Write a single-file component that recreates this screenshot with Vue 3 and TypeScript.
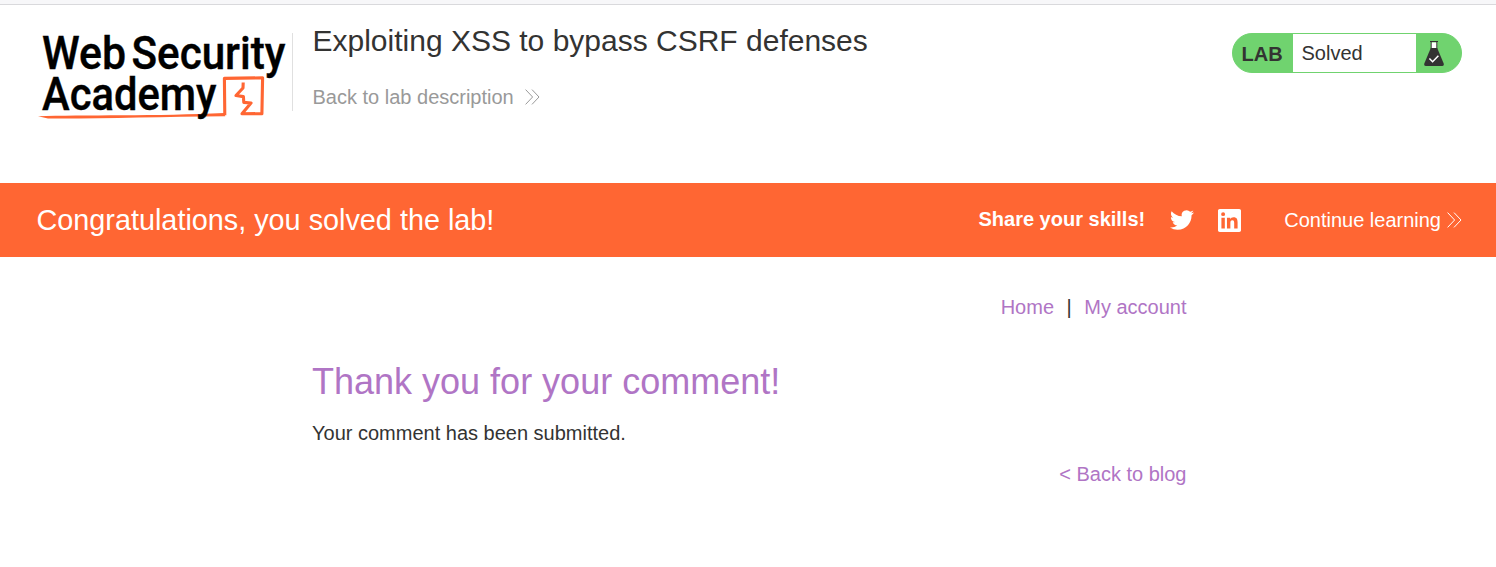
<script setup lang="ts">
const shareLabel = 'Share your skills!'
const navLinks: string[] = ['Home', 'My account']
</script>

<template>
  <div class="page">
    <div class="top-edge"></div>
    <header class="lab-header">
      <a class="logo" aria-label="Web Security Academy">
        <svg width="256" height="96" viewBox="34 29 256 96">
          <g class="word">
            <text x="42" y="69" textLength="84" lengthAdjust="spacingAndGlyphs">Web</text>
            <text x="131.5" y="69" textLength="154" lengthAdjust="spacingAndGlyphs">Security</text>
          </g>
          <path d="M38 116.3 C80 114.8 160 116.2 224 113 L225.3 116.3 C160 117 100 118.8 48 118.5 Z" fill="#ff6633" />
          <path d="M224.8 115.3 L224.4 78.4 L262.6 77.8 L261.9 113.6 L242 113.8 L251 103 L243.8 102.4 L243.4 96.6 L236 95.5 L243 88 L243.2 82.5" fill="none" stroke="#ff6633" stroke-width="3.1" stroke-linejoin="round" />
          <g class="word">
            <text x="42" y="110" textLength="174.5" lengthAdjust="spacingAndGlyphs">Academy</text>
          </g>
        </svg>
      </a>
      <div class="title-block">
        <h1>Exploiting XSS to bypass CSRF defenses</h1>
        <a class="back">
          <span>Back to lab description</span>
          <svg width="15" height="16" viewBox="0 0 15 16"><path d="M.6 .6 L7.6 8 L.6 15.4 M7 .6 L14 8 L7 15.4" /></svg>
        </a>
      </div>
      <div class="status">
        <span class="lab">LAB</span>
        <span class="state">Solved</span>
        <span class="flask">
          <svg width="20" height="26" viewBox="0 0 20 26">
            <path d="M7 1.5H13V8H7Z" fill="#fff" />
            <path d="M6 .5H14M7.2 1V8M12.8 1V8" stroke="#333332" stroke-width="1" fill="none" />
            <path d="M6.8 7H13.2L19.7 22.6Q20.2 25 18 25H2Q-.2 25 .3 22.6Z" fill="#333332" />
            <path d="M5.4 17.5L8.6 20.7L14.4 14.7" fill="none" stroke="#fff" stroke-width="1.5" />
          </svg>
        </span>
      </div>
    </header>

    <section class="banner">
      <h4>Congratulations, you solved the lab!</h4>
      <div class="share">
        <span class="share-label">{{ shareLabel }}</span>
        <svg class="twitter" width="24" height="24" viewBox="0 0 24 24"><path fill="#fff" d="M23.953 4.57a10 10 0 01-2.825.775 4.958 4.958 0 002.163-2.723c-.951.555-2.005.959-3.127 1.184a4.92 4.92 0 00-8.384 4.482C7.69 8.095 4.067 6.13 1.64 3.162a4.822 4.822 0 00-.666 2.475c0 1.71.87 3.213 2.188 4.096a4.904 4.904 0 01-2.228-.616v.06a4.923 4.923 0 003.946 4.827 4.996 4.996 0 01-2.212.085 4.936 4.936 0 004.604 3.417 9.867 9.867 0 01-6.102 2.105c-.39 0-.779-.023-1.17-.067a13.995 13.995 0 007.557 2.209c9.053 0 13.998-7.496 13.998-13.985 0-.21 0-.42-.015-.63A9.935 9.935 0 0024 4.59z" /></svg>
        <svg class="linkedin" width="23" height="23" viewBox="0 0 24 24"><path fill="#fff" d="M20.447 20.452h-3.554v-5.569c0-1.328-.027-3.037-1.852-3.037-1.853 0-2.136 1.445-2.136 2.939v5.667H9.351V9h3.414v1.561h.046c.477-.9 1.637-1.85 3.37-1.85 3.601 0 4.267 2.37 4.267 5.455v6.286zM5.337 7.433a2.062 2.062 0 01-2.063-2.065 2.064 2.064 0 112.063 2.065zm1.782 13.019H3.555V9h3.564v11.452zM22.225 0H1.771C.792 0 0 .774 0 1.729v20.542C0 23.227.792 24 1.771 24h20.451C23.2 24 24 23.227 24 22.271V1.729C24 .774 23.2 0 22.222 0h.003z" /></svg>
        <a class="continue">
          <span>Continue learning</span>
          <svg width="15" height="16" viewBox="0 0 15 16"><path d="M.6 .6 L7.6 8 L.6 15.4 M7 .6 L14 8 L7 15.4" /></svg>
        </a>
      </div>
    </section>

    <main>
      <nav>
        <a>{{ navLinks[0] }}</a><span class="bar">|</span><a>{{ navLinks[1] }}</a>
      </nav>
      <h2>Thank you for your comment!</h2>
      <p>Your comment has been submitted.</p>
      <div class="to-blog"><a>&lt; Back to blog</a></div>
    </main>
  </div>
</template>

<style>
body {
  margin: 0;
  background: #fff;
}
</style>

<style scoped>
.page {
  height: 567px;
  overflow: hidden;
  font-family: Arial, "Liberation Sans", sans-serif;
  font-size: 20px;
  line-height: 24px;
  color: #333332;
}
.page * { box-sizing: border-box; }
svg { display: block; flex: none; }
.logo svg { overflow: visible; }
span, a, h1, h2, h4 { white-space: nowrap; }
h1, h2, h4, p { margin: 0; font-weight: 400; }
.top-edge {
  height: 5px;
  background: #f7f7f9;
  border-bottom: 1px solid #d9d9dc;
}
.lab-header {
  display: flex;
  align-items: flex-start;
  height: 178px;
  padding: 24px 34px 0;
}
.word {
  font-family: Roboto, "Liberation Sans", sans-serif;
  font-weight: 500;
  font-size: 46px;
  fill: #000;
  stroke: #000;
  stroke-width: .4;
}
.title-block {
  height: 78px;
  margin: 4px 0 0 2px;
  padding-left: 19.5px;
  border-left: 1px solid #e0e0e0;
}
h1 {
  margin-top: -10px;
  font-size: 30px;
  line-height: 36px;
}
.back {
  display: flex;
  align-items: center;
  gap: 11px;
  margin-top: 26px;
  color: #999;
}
.back svg path, .continue svg path {
  fill: none;
  stroke: #999;
  stroke-width: 1;
}
.continue svg path { stroke: #fff; }
.status {
  display: flex;
  width: 230px;
  height: 40px;
  margin: 4px 0 0 auto;
  border: 1px solid #70d36f;
  border-radius: 20px;
  overflow: hidden;
  background: #70d36f;
  line-height: 38px;
}
.lab {
  width: 60px;
  padding-left: 8.5px;
  font-weight: 700;
  line-height: 40px;
}
.state {
  width: 123px;
  padding-left: 8.5px;
  background: #fff;
}
.flask { padding: 7px 0 0 8px; }
.banner {
  display: flex;
  align-items: center;
  justify-content: space-between;
  height: 74px;
  padding: 0 34px 0 36.5px;
  background: #ff6633;
  color: #fff;
}
h4 {
  font-size: 28.8px;
  line-height: 34px;
}
.share { display: flex; align-items: center; }
.share-label { font-weight: 700; margin-top: -2px; }
.twitter { margin-left: 25px; }
.linkedin { margin-left: 24px; }
.continue {
  display: flex;
  align-items: center;
  gap: 6px;
  margin-left: 43px;
}
main {
  width: 874.5px;
  margin: 0 auto 0 312px;
  padding-top: 38px;
}
nav { display: flex; justify-content: flex-end; }
nav a, .to-blog a, h2 { color: #b075c5; }
.bar { margin: 0 12.5px; }
h2 {
  margin-top: 42px;
  font-size: 36px;
  line-height: 42px;
}
p { margin-top: 18px; }
.to-blog { margin-top: 17px; text-align: right; }
</style>
